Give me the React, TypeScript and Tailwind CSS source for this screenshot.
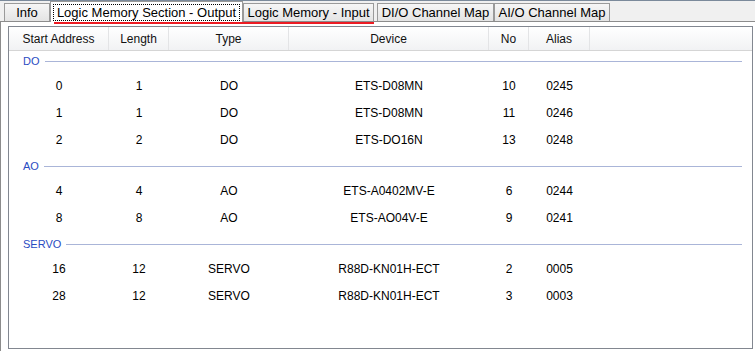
import React from 'react';

interface Row {
    start: string;
    length: string;
    type: string;
    device: string;
    no: string;
    alias: string;
}

interface Group {
    name: string;
    rows: Row[];
}

const columns = [
    { label: 'Start Address', width: 'w-[100px]' },
    { label: 'Length', width: 'w-[60px]' },
    { label: 'Type', width: 'w-[120px]' },
    { label: 'Device', width: 'w-[200px]' },
    { label: 'No', width: 'w-[40px]' },
    { label: 'Alias', width: 'w-[61px]' },
];

const groups: Group[] = [
    {
        name: 'DO',
        rows: [
            { start: '0', length: '1', type: 'DO', device: 'ETS-D08MN', no: '10', alias: '0245' },
            { start: '1', length: '1', type: 'DO', device: 'ETS-D08MN', no: '11', alias: '0246' },
            { start: '2', length: '2', type: 'DO', device: 'ETS-DO16N', no: '13', alias: '0248' },
        ],
    },
    {
        name: 'AO',
        rows: [
            { start: '4', length: '4', type: 'AO', device: 'ETS-A0402MV-E', no: '6', alias: '0244' },
            { start: '8', length: '8', type: 'AO', device: 'ETS-AO04V-E', no: '9', alias: '0241' },
        ],
    },
    {
        name: 'SERVO',
        rows: [
            { start: '16', length: '12', type: 'SERVO', device: 'R88D-KN01H-ECT', no: '2', alias: '0005' },
            { start: '28', length: '12', type: 'SERVO', device: 'R88D-KN01H-ECT', no: '3', alias: '0003' },
        ],
    },
];

function Tab({ label, width, className = '' }: { label: string; width: string; className?: string }) {
    return (
        <div
            className={`${width} h-[18px] flex items-center justify-center border border-b-0 border-[#9a9a9a] bg-gradient-to-b from-[#f6f6f6] to-[#e4e4e4] text-[13px] leading-none text-black ${className}`}
        >
            {label}
        </div>
    );
}

export default function App() {
    return (
        <div className="w-[755px] h-[351px] flex flex-col bg-[#f0f0f0] border-t border-[#7b8a9b] font-['Liberation_Sans',Arial,sans-serif] overflow-hidden">
            {/* tab strip */}
            <div className="h-[20px] flex items-end pl-[4px]">
                <Tab label="Info" width="w-[46px]" />
                <div className="relative z-10 w-[193px] h-[21px] -mb-px flex items-center justify-center bg-white border border-b-0 border-[#9a9a9a] px-[2px]">
                    <div className="w-full h-[17px] mt-[1px] flex items-center justify-center border border-dotted border-black text-[13px] leading-none text-black">
                        Logic Memory Section - Output
                    </div>
                </div>
                <Tab label="Logic Memory - Input" width="w-[131px]" />
                <Tab label="DI/O Channel Map" width="w-[117px]" className="ml-[3px]" />
                <Tab label="AI/O Channel Map" width="w-[116px]" />
            </div>

            {/* tab page */}
            <div className="relative flex-1 bg-white border-t border-l border-[#8c8c8c] pt-[4px] pl-[7px] pr-[2px] pb-[2px]">
                <div className="absolute left-[53px] top-0 w-[320px] h-[2px] bg-[#ec1c24]" />

                <div className="h-[323px] border border-[#828790] bg-white flex flex-col">
                    {/* header */}
                    <div className="h-[24px] flex bg-gradient-to-b from-white to-[#f1f2f4] border-b border-[#d5d5d5]">
                        {columns.map((c) => (
                            <div
                                key={c.label}
                                className={`${c.width} flex items-center justify-center border-r border-[#e3e4e6] text-[12px] text-[#111]`}
                            >
                                {c.label}
                            </div>
                        ))}
                    </div>

                    {groups.map((g, gi) => (
                        <div key={g.name}>
                            <div
                                className={`flex items-center pl-[14px] pr-[10px] ${gi === 0 ? 'h-[21px]' : 'h-[24px] pt-[2px]'}`}
                            >
                                <span className="text-[11px] leading-none text-[#2a4cc2]">{g.name}</span>
                                <div className="flex-1 h-px bg-[#aab5d8] ml-[5px]" />
                            </div>
                            {g.rows.map((r) => (
                                <div key={r.start} className="h-[27px] flex items-center text-[12px] text-black">
                                    <div className="w-[100px] text-center">{r.start}</div>
                                    <div className="w-[60px] text-center">{r.length}</div>
                                    <div className="w-[120px] text-center">{r.type}</div>
                                    <div className="w-[200px] text-center">{r.device}</div>
                                    <div className="w-[40px] text-center">{r.no}</div>
                                    <div className="w-[61px] text-center">{r.alias}</div>
                                </div>
                            ))}
                        </div>
                    ))}
                </div>
            </div>
        </div>
    );
}
